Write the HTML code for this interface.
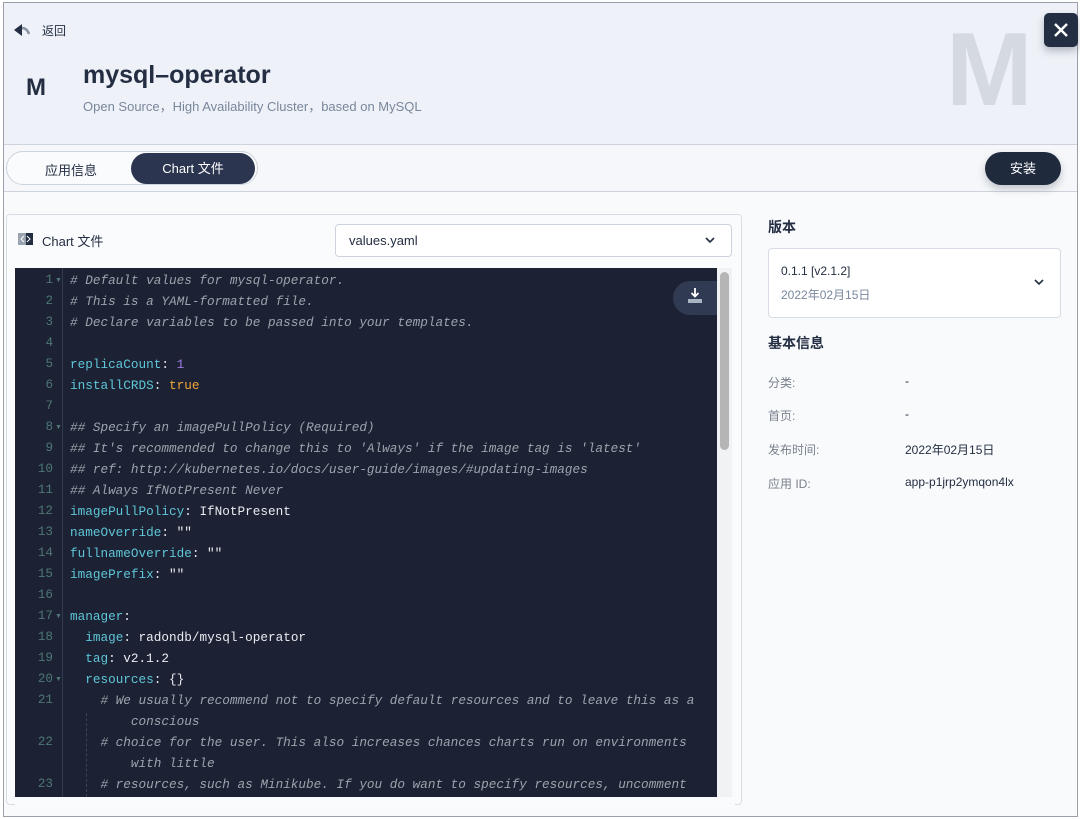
<!DOCTYPE html>
<html><head><meta charset="utf-8"><style>
*{margin:0;padding:0;box-sizing:border-box}
body{width:1080px;height:819px;overflow:hidden;background:#fff;font-family:"Liberation Sans","Noto Sans CJK SC",sans-serif;position:relative}
.a{position:absolute}
#frame{left:3px;top:2px;width:1075px;height:815px;border:1px solid #9aa0a8;background:#f8fafc;overflow:hidden}
.code{position:absolute;left:70px;font-family:"Liberation Mono","Noto Sans CJK SC",monospace;font-size:12.7px;line-height:21px;white-space:pre;color:#e8ebf0}
.ln{position:absolute;left:15px;width:38px;text-align:right;font-family:"Liberation Mono",monospace;font-size:12.6px;line-height:21px;color:#4e7775}
.c{color:#9da3ad;font-style:italic}.k{color:#5ec6d8}.n{color:#a07ce6}.t{color:#f2a63a}
.fold{position:absolute;left:55px;font-size:7px;color:#4e7775;line-height:21px}
.lbl{color:#7a818c;font-size:12px;position:absolute;left:768px}
.val{color:#242e42;font-size:12px;position:absolute;left:905px}
</style></head><body>
<div id="frame" class="a">
<div class="a" style="left:0;top:0;width:1075px;height:142px;background:#eef1f7;border-bottom:1px solid #cdd3dc"></div>
<div class="a" style="left:0;top:142px;width:1075px;height:47px;background:#f5f7fa;border-bottom:1px solid #cdd3dc"></div>
</div>
<!-- header -->
<svg class="a" style="left:14px;top:24px" width="18" height="13" viewBox="0 0 18 13"><path d="M0 6 L8 0 V12 Z" fill="#242e42"/><path d="M8 4 Q13 4 15 10" stroke="#8a94a3" stroke-width="2.5" fill="none"/></svg>
<div class="a" style="left:42px;top:22px;font-size:12px;color:#242e42">返回</div>
<div class="a" style="left:26px;top:74px;font-size:24px;font-weight:bold;color:#242e42">M</div>
<div class="a" style="left:83px;top:61px;font-size:25px;font-weight:bold;color:#242e42">mysql–operator</div>
<div class="a" style="left:83px;top:96px;font-size:13px;color:#79879c">Open Source，High Availability Cluster，based on MySQL</div>
<div class="a" style="left:946px;top:10px;font-size:104px;font-weight:bold;color:#d5dae2;line-height:120px">M</div>
<div class="a" style="left:1044px;top:13px;width:34px;height:34px;background:#242e42;border-radius:5px;box-shadow:0 4px 8px rgba(36,46,66,.3)"><svg width="34" height="34" viewBox="0 0 34 34"><path d="M11 11 L23 23 M23 11 L11 23" stroke="#fff" stroke-width="2.4"/></svg></div>
<!-- tabs -->
<div class="a" style="left:6px;top:151px;width:252px;height:34px;border:1px solid #cdd3dc;border-radius:17px;background:#f9fbfd"></div>
<div class="a" style="left:45px;top:160px;font-size:13px;color:#242e42">应用信息</div>
<div class="a" style="left:131px;top:153px;width:124px;height:31px;border-radius:16px;background:#2b3550;color:#fff;font-size:13px;text-align:center;line-height:31px">Chart 文件</div>
<div class="a" style="left:985px;top:152px;width:76px;height:33px;border-radius:17px;background:#1f2a3d;color:#fff;font-size:13px;text-align:center;line-height:33px;box-shadow:0 4px 8px rgba(36,46,66,.25)">安装</div>
<!-- card -->
<div class="a" style="left:6px;top:214px;width:736px;height:591px;border:1px solid #d8dde5;border-radius:4px;background:#fafbfd"></div>
<svg class="a" style="left:18px;top:233px" width="15" height="12" viewBox="0 0 15 12"><rect width="15" height="12" fill="#9aa3b0"/><rect x="8" width="7" height="12" fill="#242e42"/><path d="M6 3 L3 6 L6 9 M9 3 L12 6 L9 9" stroke="#fff" stroke-width="1" fill="none"/></svg>
<div class="a" style="left:42px;top:231px;font-size:13px;color:#242e42">Chart 文件</div>
<div class="a" style="left:335px;top:224px;width:397px;height:33px;border:1px solid #cdd3dc;border-radius:4px;background:#fff"></div>
<div class="a" style="left:349px;top:233px;font-size:13px;color:#242e42">values.yaml</div>
<svg class="a" style="left:704px;top:236px" width="12" height="8" viewBox="0 0 12 8"><path d="M2 2 L6 6 L10 2" stroke="#242e42" stroke-width="1.6" fill="none"/></svg>
<!-- editor -->
<div class="a" style="left:15px;top:268px;width:703px;height:529px;background:#1c2233"></div>
<div class="a" style="left:62px;top:268px;width:1px;height:529px;background:#323a4d"></div>
<div class="a" style="left:717px;top:268px;width:15px;height:529px;background:#f1f2f4"></div>
<div class="a" style="left:720px;top:272px;width:9px;height:178px;background:#b5b5b5;border-radius:5px"></div>
<div class="a" style="left:673px;top:281px;width:44px;height:34px;border-radius:17px 0 0 17px;background:#303a53"></div>
<svg class="a" style="left:687px;top:287px" width="16" height="20" viewBox="0 0 16 20"><path d="M8 1 V9 M4.5 6 L8 9.5 L11.5 6" stroke="#fff" stroke-width="1.8" fill="none"/><rect x="1" y="12" width="14" height="4" fill="#aab3c2"/></svg>
<div class="a" style="left:86px;top:713px;border-left:1px dashed #3b4357;height:84px"></div>

<div class="ln" style="top:270px">1</div><div class="fold" style="top:270px">▼</div>
<div class="ln" style="top:291px">2</div><div class="ln" style="top:312px">3</div><div class="ln" style="top:333px">4</div>
<div class="ln" style="top:354px">5</div><div class="ln" style="top:375px">6</div><div class="ln" style="top:396px">7</div>
<div class="ln" style="top:417px">8</div><div class="fold" style="top:417px">▼</div>
<div class="ln" style="top:438px">9</div><div class="ln" style="top:459px">10</div><div class="ln" style="top:480px">11</div>
<div class="ln" style="top:501px">12</div><div class="ln" style="top:522px">13</div><div class="ln" style="top:543px">14</div>
<div class="ln" style="top:564px">15</div><div class="ln" style="top:585px">16</div>
<div class="ln" style="top:606px">17</div><div class="fold" style="top:606px">▼</div>
<div class="ln" style="top:627px">18</div><div class="ln" style="top:648px">19</div>
<div class="ln" style="top:669px">20</div><div class="fold" style="top:669px">▼</div>
<div class="ln" style="top:690px">21</div><div class="ln" style="top:732px">22</div><div class="ln" style="top:774px">23</div>

<div class="code" style="top:270px"><span class="c"># Default values for mysql-operator.
# This is a YAML-formatted file.
# Declare variables to be passed into your templates.</span>

<span class="k">replicaCount</span>: <span class="n">1</span>
<span class="k">installCRDS</span>: <span class="t">true</span>

<span class="c">## Specify an imagePullPolicy (Required)
## It's recommended to change this to 'Always' if the image tag is 'latest'
## ref: http://kubernetes.io/docs/user-guide/images/#updating-images
## Always IfNotPresent Never</span>
<span class="k">imagePullPolicy</span>: IfNotPresent
<span class="k">nameOverride</span>: ""
<span class="k">fullnameOverride</span>: ""
<span class="k">imagePrefix</span>: ""

<span class="k">manager</span>:
  <span class="k">image</span>: radondb/mysql-operator
  <span class="k">tag</span>: v2.1.2
  <span class="k">resources</span>: {}
    <span class="c"># We usually recommend not to specify default resources and to leave this as a
        conscious
    # choice for the user. This also increases chances charts run on environments
        with little
    # resources, such as Minikube. If you do want to specify resources, uncomment</span></div>
<div class="a" style="left:15px;top:797px;width:720px;height:10px;background:#fafbfd"></div>

<!-- right -->
<div class="a" style="left:768px;top:217px;font-size:14px;font-weight:bold;color:#242e42">版本</div>
<div class="a" style="left:768px;top:248px;width:293px;height:70px;border:1px solid #d8dde5;border-radius:4px;background:#fff"></div>
<div class="a" style="left:781px;top:264px;font-size:12px;color:#242e42">0.1.1 [v2.1.2]</div>
<div class="a" style="left:781px;top:286px;font-size:12px;color:#79879c">2022年02月15日</div>
<svg class="a" style="left:1033px;top:278px" width="12" height="8" viewBox="0 0 12 8"><path d="M2 2 L6 6 L10 2" stroke="#242e42" stroke-width="1.6" fill="none"/></svg>
<div class="a" style="left:768px;top:333px;font-size:14px;font-weight:bold;color:#242e42">基本信息</div>
<div class="lbl" style="top:374px">分类:</div><div class="val" style="top:374px">-</div>
<div class="lbl" style="top:407px">首页:</div><div class="val" style="top:407px">-</div>
<div class="lbl" style="top:441px">发布时间:</div><div class="val" style="top:441px">2022年02月15日</div>
<div class="lbl" style="top:475px">应用 ID:</div><div class="val" style="top:475px">app-p1jrp2ymqon4lx</div>
</body></html>
